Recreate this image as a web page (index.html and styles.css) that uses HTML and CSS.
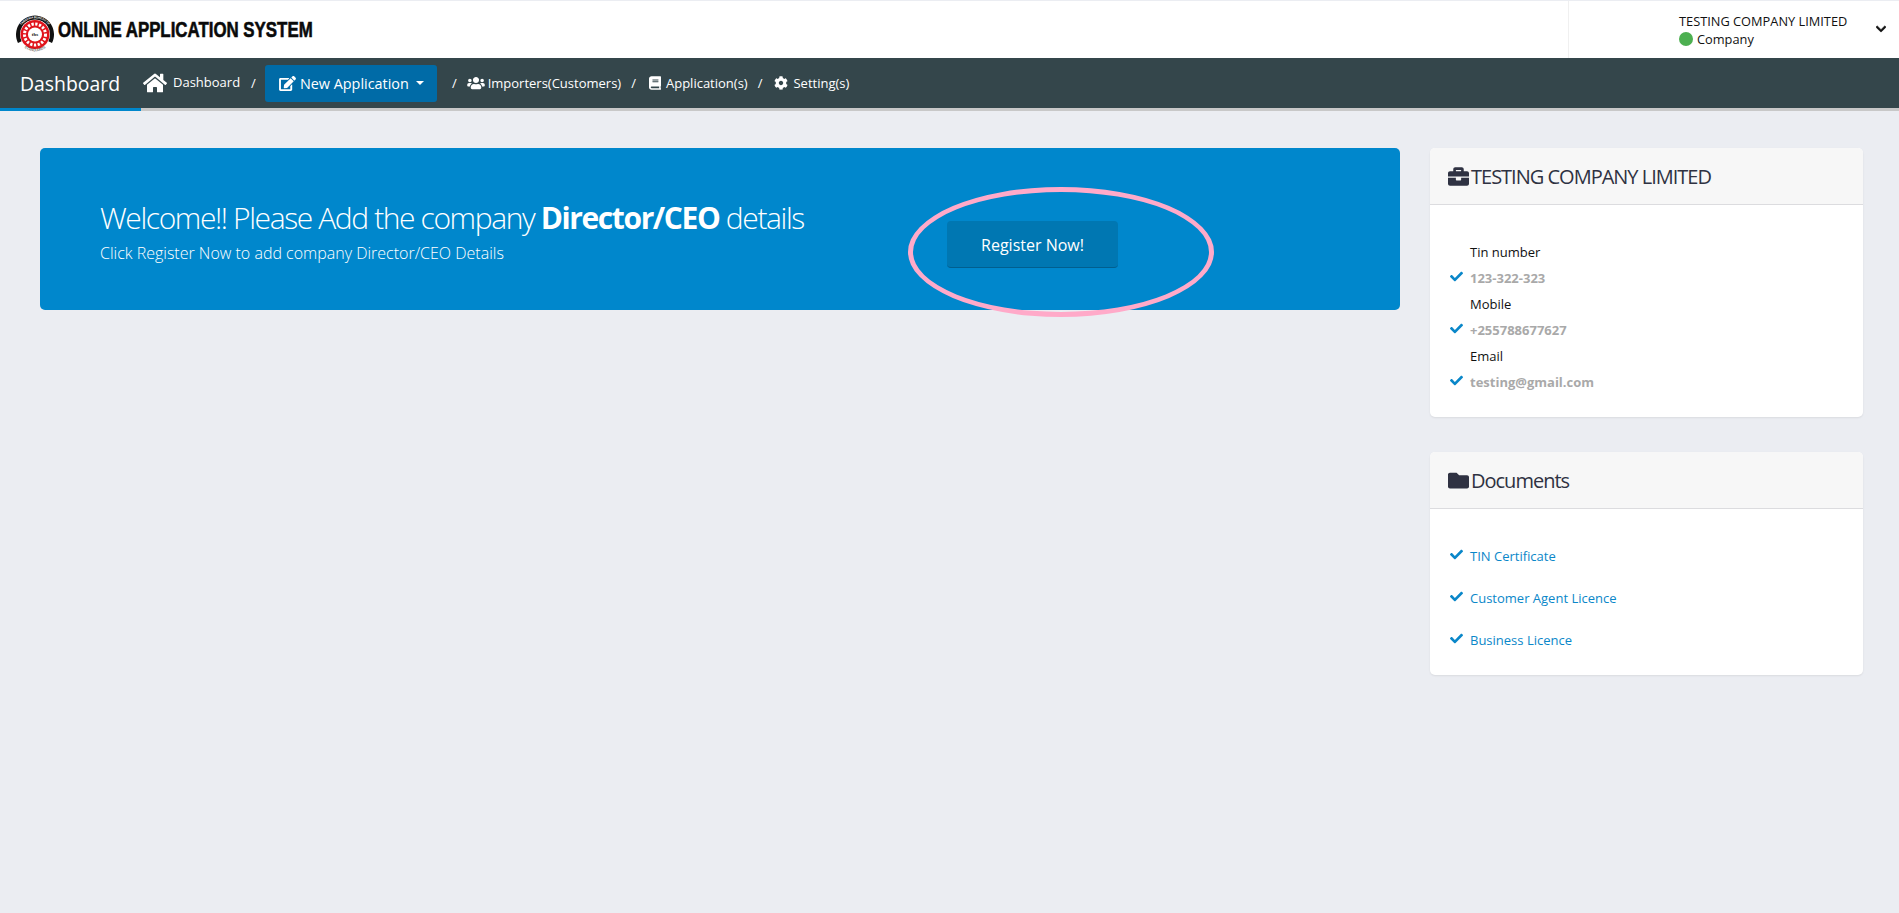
FILE: index.html
```html
<!DOCTYPE html>
<html>

<head>
    <title>Online Application System</title>
    <link rel="stylesheet" href="styles.css">
</head>

<body>
    <!-- Icon set -->
    <svg class="icon-defs" xmlns="http://www.w3.org/2000/svg">
        <symbol id="i-home" viewBox="0 0 576 512"><path d="M280.37 148.26L96 300.11V464a16 16 0 0 0 16 16l112.06-.29a16 16 0 0 0 15.92-16V368a16 16 0 0 1 16-16h64a16 16 0 0 1 16 16v95.64a16 16 0 0 0 16 16.05L464 480a16 16 0 0 0 16-16V300L295.67 148.26a12.19 12.19 0 0 0-15.3 0zM571.6 251.47L488 182.56V44.05a12 12 0 0 0-12-12h-56a12 12 0 0 0-12 12v72.61L318.47 43a48 48 0 0 0-61 0L4.34 251.47a12 12 0 0 0-1.6 16.9l25.5 31A12 12 0 0 0 45.15 301l235.22-193.74a12.19 12.19 0 0 1 15.3 0L530.9 301a12 12 0 0 0 16.9-1.6l25.5-31a12 12 0 0 0-1.7-16.93z"/></symbol>
        <symbol id="i-check" viewBox="0 0 512 512"><path d="M173.898 439.404l-166.4-166.4c-9.997-9.997-9.997-26.206 0-36.204l36.203-36.204c9.997-9.998 26.207-9.998 36.204 0L192 312.69 432.095 72.596c9.997-9.997 26.207-9.997 36.204 0l36.203 36.204c9.997 9.997 9.997 26.206 0 36.204l-294.4 294.401c-9.998 9.997-26.207 9.997-36.204-.001z"/></symbol>
        <symbol id="i-folder" viewBox="0 0 512 512"><path d="M464 128H272l-64-64H48C21.49 64 0 85.49 0 112v288c0 26.51 21.49 48 48 48h416c26.51 0 48-21.49 48-48V176c0-26.51-21.49-48-48-48z"/></symbol>
        <symbol id="i-briefcase" viewBox="0 0 512 512"><path d="M320 336c0 8.84-7.16 16-16 16h-96c-8.84 0-16-7.16-16-16v-48H0v144c0 25.6 22.4 48 48 48h416c25.6 0 48-22.4 48-48V288H320v48zm144-208h-80V80c0-25.6-22.4-48-48-48H176c-25.6 0-48 22.4-48 48v48H48c-25.6 0-48 22.4-48 48v80h512v-80c0-25.6-22.4-48-48-48zm-144 0H192V96h128v32z"/></symbol>
        <symbol id="i-users" viewBox="0 0 640 512"><path d="M96 224c35.3 0 64-28.7 64-64s-28.7-64-64-64-64 28.7-64 64 28.7 64 64 64zm448 0c35.3 0 64-28.7 64-64s-28.7-64-64-64-64 28.7-64 64 28.7 64 64 64zm32 32h-64c-17.6 0-33.5 7.1-45.1 18.6 40.3 22.1 68.9 62 75.1 109.4h66c17.7 0 32-14.3 32-32v-32c0-35.3-28.7-64-64-64zm-256 0c61.9 0 112-50.1 112-112S381.9 32 320 32 208 82.1 208 144s50.1 112 112 112zm76.8 32h-8.3c-20.8 10-43.9 16-68.5 16s-47.6-6-68.5-16h-8.3C179.6 288 128 339.6 128 403.2V432c0 26.5 21.5 48 48 48h288c26.5 0 48-21.5 48-48v-28.8c0-63.6-51.6-115.2-115.2-115.2zm-223.7-13.4C161.5 263.1 145.6 256 128 256H64c-35.3 0-64 28.7-64 64v32c0 17.7 14.3 32 32 32h65.9c6.3-47.4 34.9-87.3 75.2-109.4z"/></symbol>
        <symbol id="i-book" viewBox="0 0 448 512"><path d="M448 360V24c0-13.3-10.7-24-24-24H96C43 0 0 43 0 96v320c0 53 43 96 96 96h328c13.3 0 24-10.7 24-24v-16c0-7.5-3.5-14.3-8.9-18.7-4.2-15.4-4.2-59.3 0-74.7 5.4-4.3 8.9-11.1 8.9-18.6zM128 134c0-3.3 2.7-6 6-6h212c3.3 0 6 2.7 6 6v20c0 3.3-2.7 6-6 6H134c-3.3 0-6-2.7-6-6v-20zm0 64c0-3.3 2.7-6 6-6h212c3.3 0 6 2.7 6 6v20c0 3.3-2.7 6-6 6H134c-3.3 0-6-2.7-6-6v-20zm253.4 250H96c-17.7 0-32-14.3-32-32 0-17.6 14.4-32 32-32h285.4c-1.9 17.1-1.9 46.9 0 64z"/></symbol>
        <symbol id="i-cog" viewBox="0 0 512 512"><path d="M487.4 315.7l-42.6-24.6c4.3-23.2 4.3-47 0-70.2l42.6-24.6c4.9-2.8 7.1-8.6 5.5-14-11.1-35.6-30-67.8-54.7-94.6-3.8-4.1-10-5.1-14.8-2.3L380.8 110c-17.9-15.4-38.5-27.3-60.8-35.1V25.8c0-5.6-3.9-10.5-9.4-11.7-36.7-8.2-74.3-7.8-109.2 0-5.5 1.2-9.4 6.1-9.4 11.7V75c-22.2 7.9-42.8 19.8-60.8 35.1L88.7 85.5c-4.9-2.8-11-1.9-14.8 2.3-24.7 26.7-43.6 58.9-54.7 94.6-1.7 5.4.6 11.2 5.5 14L67.3 221c-4.3 23.2-4.3 47 0 70.2l-42.6 24.6c-4.9 2.8-7.1 8.6-5.5 14 11.1 35.6 30 67.8 54.7 94.6 3.8 4.1 10 5.1 14.8 2.3l42.6-24.6c17.9 15.4 38.5 27.3 60.8 35.1v49.2c0 5.6 3.9 10.5 9.4 11.7 36.7 8.2 74.3 7.8 109.2 0 5.5-1.2 9.4-6.1 9.4-11.7v-49.2c22.2-7.9 42.8-19.8 60.8-35.1l42.6 24.6c4.9 2.8 11 1.9 14.8-2.3 24.7-26.7 43.6-58.9 54.7-94.6 1.5-5.5-.7-11.3-5.6-14.1zM256 336c-44.1 0-80-35.9-80-80s35.9-80 80-80 80 35.9 80 80-35.9 80-80 80z"/></symbol>
        <symbol id="i-edit" viewBox="0 0 576 512"><path d="M402.6 83.2l90.2 90.2c3.8 3.8 3.8 10 0 13.8L274.4 405.6l-92.8 10.3c-12.4 1.4-22.9-9.1-21.5-21.5l10.3-92.8L388.8 83.2c3.8-3.8 10-3.8 13.8 0zm162-22.9l-48.8-48.8c-15.2-15.2-39.9-15.2-55.2 0l-35.4 35.4c-3.8 3.8-3.8 10 0 13.8l90.2 90.2c3.8 3.8 10 3.8 13.8 0l35.4-35.4c15.2-15.3 15.2-40 0-55.2zM384 346.2V448H64V128h229.8c3.2 0 6.2-1.3 8.5-3.5l40-40c7.6-7.6 2.2-20.5-8.5-20.5H48C21.5 64 0 85.5 0 112v352c0 26.5 21.5 48 48 48h352c26.5 0 48-21.5 48-48V306.2c0-10.7-12.9-16-20.5-8.5l-40 40c-2.2 2.3-3.5 5.3-3.5 8.5z"/></symbol>
        <symbol id="i-chevron" viewBox="0 0 448 512"><path d="M207.029 381.476L12.686 187.132c-9.373-9.373-9.373-24.569 0-33.941l22.667-22.667c9.357-9.357 24.522-9.375 33.901-.04L224 284.505l154.745-154.021c9.379-9.335 24.544-9.317 33.901.04l22.667 22.667c9.373 9.373 9.373 24.569 0 33.941L240.971 381.476c-9.373 9.372-24.569 9.372-33.942 0z"/></symbol>
    </svg>

    <!-- Top bar -->
    <header class="topbar">
        <div class="brand">
            <svg class="seal" viewBox="0 0 40 40" xmlns="http://www.w3.org/2000/svg">
                <defs>
                    <path id="seal-top" d="M3.200 21a16.800 16.800 0 0 1 33.600 0"/>
                    <path id="seal-bottom" d="M7.500 32a17.500 17.500 0 0 0 25 0"/>
                </defs>
                <path d="M3 29A19 19 0 1 1 37 29L33.400 27.200A15 15 0 1 0 6.600 27.200Z" fill="#111"/>
                <circle cx="20" cy="20.500" r="14.500" fill="#e0141c"/>
                <circle cx="20" cy="20.500" r="10.500" fill="none" stroke="#fff" stroke-width="3" stroke-dasharray="2.300 1.500"/>
                <circle cx="20" cy="20.500" r="7" fill="#fff"/>
                <text class="seal-tbs" x="20" y="22" text-anchor="middle">tbs</text>
                <text class="seal-ring"><textPath href="#seal-top" startOffset="50%" text-anchor="middle">TANZANIA BUREAU OF</textPath></text>
                <text class="seal-std"><textPath href="#seal-bottom" startOffset="50%" text-anchor="middle">STANDARDS</textPath></text>
            </svg>
            <span class="brand-name">ONLINE APPLICATION SYSTEM</span>
        </div>
        <div class="account">
            <div class="account-info">
                <div class="account-name">TESTING COMPANY LIMITED</div>
                <div class="account-role"><span class="dot"></span>Company</div>
            </div>
            <svg class="account-arrow"><use href="#i-chevron"/></svg>
        </div>
    </header>

    <!-- Nav bar -->
    <nav class="navbar">
        <div class="nav-title">Dashboard</div>
        <svg class="nav-home"><use href="#i-home"/></svg>
        <a class="nav-link nav-link-raised">Dashboard</a>
        <span class="nav-sep nav-sep-first">/</span>
        <button class="nav-button">
            <svg class="nav-icon-edit"><use href="#i-edit"/></svg>
            <span>New Application</span>
            <span class="caret"></span>
        </button>
        <span class="nav-sep nav-sep-second">/</span>
        <svg class="nav-icon-users"><use href="#i-users"/></svg>
        <a class="nav-link">Importers(Customers)</a>
        <span class="nav-sep">/</span>
        <svg class="nav-icon-book"><use href="#i-book"/></svg>
        <a class="nav-link">Application(s)</a>
        <span class="nav-sep">/</span>
        <svg class="nav-icon-cog"><use href="#i-cog"/></svg>
        <a class="nav-link">Setting(s)</a>
    </nav>
    <div class="nav-underline"><div class="nav-underline-active"></div></div>

    <!-- Content -->
    <main class="content">
        <section class="welcome">
            <div class="welcome-text">
                <h2>Welcome!! Please Add the company <b>Director/CEO</b> details</h2>
                <p>Click Register Now to add company Director/CEO Details</p>
            </div>
            <div class="register">
                <a class="register-button">Register Now!</a>
                <div class="register-ring"></div>
            </div>
        </section>

        <aside class="sidebar">
            <section class="card">
                <h3 class="card-head"><svg><use href="#i-briefcase"/></svg>TESTING COMPANY LIMITED</h3>
                <div class="card-body">
                    <div class="info-label">Tin number</div>
                    <div class="info-value"><svg class="check"><use href="#i-check"/></svg><b>123-322-323</b></div>
                    <div class="info-label">Mobile</div>
                    <div class="info-value"><svg class="check"><use href="#i-check"/></svg><b>+255788677627</b></div>
                    <div class="info-label">Email</div>
                    <div class="info-value"><svg class="check"><use href="#i-check"/></svg><b>testing@gmail.com</b></div>
                </div>
            </section>

            <section class="card">
                <h3 class="card-head"><svg><use href="#i-folder"/></svg>Documents</h3>
                <div class="card-body card-body-docs">
                    <div class="doc"><svg class="check"><use href="#i-check"/></svg><a>TIN Certificate</a></div>
                    <div class="doc"><svg class="check"><use href="#i-check"/></svg><a>Customer Agent Licence</a></div>
                    <div class="doc"><svg class="check"><use href="#i-check"/></svg><a>Business Licence</a></div>
                </div>
            </section>
        </aside>
    </main>
</body>
</html>
```

FILE: styles.css
```css
/* Base */
body {
    margin: 0;
    height: 913px;
    overflow: hidden;
    background-color: #ebedf2;
    font-family: 'Open Sans', sans-serif;
    font-size: 13px;
    color: #212529;
}

.icon-defs {
    display: none;
}

svg {
    fill: currentColor;
    flex: none;
}

/* Top bar */
.topbar {
    display: flex;
    justify-content: space-between;
    height: 57px;
    margin-top: 1px;
    background-color: #ffffff;
}

.brand {
    display: flex;
    align-items: center;
    padding-left: 15px;
    gap: 3px;
}

.seal {
    width: 40px;
    height: 40px;
    margin-top: 9px;
}

.seal-tbs {
    font-family: 'Liberation Serif', serif;
    font-size: 5px;
    font-weight: bold;
    fill: #111;
}

.seal-ring {
    font-family: 'Liberation Sans', sans-serif;
    font-size: 2.8px;
    font-weight: bold;
    fill: #fff;
}

.seal-std {
    font-family: 'Liberation Serif', serif;
    font-size: 3.8px;
    fill: #222;
}

.brand-name {
    display: inline-block;
    font-family: 'Liberation Sans', sans-serif;
    font-size: 22px;
    font-weight: bold;
    color: #0a0a0a;
    -webkit-text-stroke: 0.6px #0a0a0a;
    transform: scaleX(0.766);
    transform-origin: left center;
    white-space: nowrap;
}

.account {
    display: flex;
    width: 331px;
    border-left: 1px solid #f0f0f0;
    box-sizing: border-box;
    padding: 11px 13px 0 110px;
    justify-content: space-between;
    color: #111;
    font-size: 12.8px;
}

.account-name {
    line-height: 18px;
}

.account-role {
    display: flex;
    align-items: center;
    line-height: 18px;
}

.dot {
    width: 14px;
    height: 14px;
    margin-right: 4px;
    border-radius: 50%;
    background-color: #4caf50;
}

.account-arrow {
    width: 10px;
    height: 12px;
    margin-top: 11px;
    stroke: currentColor;
    stroke-width: 30px;
}

/* Nav bar */
.navbar {
    display: flex;
    align-items: center;
    height: 50px;
    background-color: #34464b;
    color: #ffffff;
    font-size: 13px;
    white-space: nowrap;
}

.nav-title {
    margin-left: 20px;
    font-size: 19.4px;
    width: 123px;
}

.nav-home {
    width: 24px;
    height: 24px;
    margin-right: 6px;
}

.nav-link {
    display: block;
}

.nav-link-raised {
    margin-top: -3px;
}

.nav-sep {
    margin: 0 10px;
    font-size: 13px;
}

.nav-sep-first {
    margin-left: 11px;
    margin-right: 9px;
}

.nav-sep-second {
    margin-left: 15px;
    margin-right: 10px;
}

.nav-button {
    display: flex;
    align-items: center;
    width: 172px;
    height: 37px;
    padding: 0 0 0 14px;
    border: none;
    border-radius: 3px;
    background-color: #006ba7;
    color: #ffffff;
    font-family: inherit;
    font-size: 14.4px;
}

.nav-icon-edit {
    width: 17px;
    height: 15px;
    margin-right: 4px;
}

.caret {
    margin-left: 7px;
    border-top: 4px solid #ffffff;
    border-left: 4px solid transparent;
    border-right: 4px solid transparent;
}

.nav-icon-users {
    width: 18px;
    height: 14px;
    margin-right: 3px;
}

.nav-icon-book {
    width: 12px;
    height: 14px;
    margin: 0 5px 0 3px;
}

.nav-icon-cog {
    width: 14px;
    height: 14px;
    margin: 0 5px 0 2px;
}

.nav-underline {
    height: 3px;
    background-color: #c8c8c8;
}

.nav-underline-active {
    width: 141px;
    height: 3px;
    background-color: #0087cc;
}

/* Content */
.content {
    display: grid;
    grid-template-columns: 1360px 433px;
    gap: 30px;
    align-items: start;
    padding: 37px 0 0 40px;
}

.welcome {
    display: flex;
    height: 162px;
    border-radius: 5px;
    background-color: #0087cc;
    color: #ffffff;
}

.welcome-text {
    width: 907px;
    padding: 51px 0 0 60px;
    box-sizing: border-box;
}

.welcome h2 {
    margin: 0;
    font-size: 30px;
    font-weight: 300;
    line-height: 38px;
    letter-spacing: -1.4px;
}

.welcome b {
    font-weight: 700;
}

.welcome p {
    margin: 4px 0 0;
    font-size: 16px;
    font-weight: 300;
    line-height: 24px;
}

.register {
    position: relative;
    padding-top: 73px;
}

.register-button {
    display: flex;
    align-items: center;
    justify-content: center;
    width: 171px;
    height: 45px;
    padding-top: 1px;
    box-sizing: content-box;
    border-bottom: 1px solid #015f8f;
    border-radius: 4px;
    background-color: #0077b2;
    font-size: 16px;
}

/* Hand-drawn highlight around the button */
.register-ring {
    position: absolute;
    left: -39px;
    top: 39px;
    width: 296px;
    height: 120px;
    border: 5px solid #ffaac9;
    border-radius: 50%;
}

/* Sidebar cards */
.sidebar {
    display: flex;
    flex-direction: column;
    gap: 35px;
}

.card {
    border-radius: 5px;
    background-color: #ffffff;
    box-shadow: 0 1px 2px rgba(0, 0, 0, 0.08);
    overflow: hidden;
}

.card-head {
    display: flex;
    align-items: center;
    gap: 2px;
    height: 56px;
    margin: 0;
    padding-left: 18px;
    border-bottom: 1px solid #dcdcdf;
    background-color: #f7f7f7;
    color: #2f3242;
    font-size: 20px;
    font-weight: 400;
    letter-spacing: -1px;
}

.card-head svg {
    width: 21px;
    height: 21px;
}

.card-body {
    height: 212px;
    padding: 34px 0 0 20px;
    box-sizing: border-box;
}

.card-body-docs {
    height: 166px;
    padding-top: 26px;
}

.info-label {
    height: 26px;
    line-height: 26px;
    padding-left: 20px;
    color: #111;
}

.info-value {
    display: flex;
    align-items: center;
    height: 26px;
    line-height: 26px;
    color: #a9a9a9;
}

.check {
    width: 13px;
    height: 13px;
    margin-right: 7px;
    margin-top: -3px;
    color: #0a87c9;
}

.doc {
    display: flex;
    align-items: center;
    height: 42px;
    color: #0a87c9;
}
```
